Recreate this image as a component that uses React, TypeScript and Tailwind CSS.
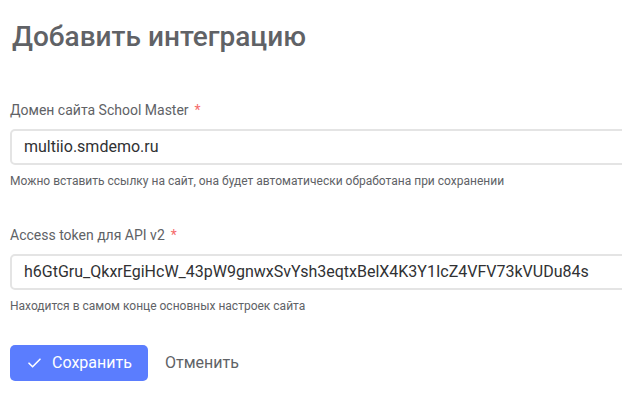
import React from "react";

function Field({ label, value, hint, mt }: { label: string; value: string; hint: string; mt: string }) {
  return (
    <div className={mt}>
      <div className="h-[20px] text-[14px] leading-[20px] text-[#606266]">
        {label}
        <span className="ml-[6px] text-[#f56c6c]">*</span>
      </div>
      <div className="mt-[9px] flex h-[36px] w-[700px] items-center rounded-[5px] border-2 border-[#e4e4e4] bg-white pl-[12px] text-[16px] text-[#303133]">
        {value}
      </div>
      <div className="mt-[8px] h-[16px] text-[12px] leading-[16px] text-[#606266]">{hint}</div>
    </div>
  );
}

export default function App() {
  return (
    <div
      className="h-[399px] w-[622px] overflow-hidden bg-white pl-[10px]"
      style={{ fontFamily: "Roboto, 'Noto Sans', sans-serif" }}
    >
      <h1 className="ml-[2px] pt-[19px] text-[28px] font-medium leading-[36px] text-[#606266]">
        Добавить интеграцию
      </h1>
      <Field
        mt="mt-[45px]"
        label="Домен сайта School Master"
        value="multiio.smdemo.ru"
        hint="Можно вставить ссылку на сайт, она будет автоматически обработана при сохранении"
      />
      <Field
        mt="mt-[36px]"
        label="Access token для API v2"
        value="h6GtGru_QkxrEgiHcW_43pW9gnwxSvYsh3eqtxBelX4K3Y1IcZ4VFV73kVUDu84s"
        hint="Находится в самом конце основных настроек сайта"
      />
      <div className="mt-[31px] flex items-center">
        <button className="flex h-[36px] w-[138px] items-center rounded-[5px] bg-[#5b7dfe] pl-[18px] text-[16px] text-white">
          <svg width="13" height="10" viewBox="0 0 13 10" fill="none" stroke="white" strokeWidth="1.6" strokeLinecap="round" strokeLinejoin="round">
            <path d="M1 5.2 L4.6 8.8 L12 1.2" />
          </svg>
          <span className="ml-[11px]">Сохранить</span>
        </button>
        <span className="ml-[17px] text-[16px] text-[#606266]">Отменить</span>
      </div>
    </div>
  );
}
